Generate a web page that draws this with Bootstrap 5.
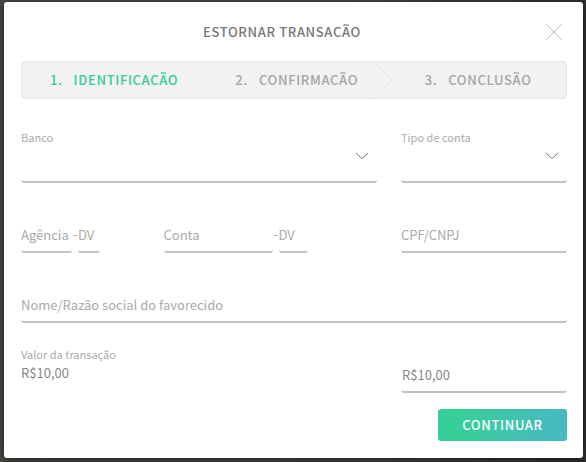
<!DOCTYPE html>
<html lang="pt-BR">
<head>
<meta charset="utf-8">
<meta name="viewport" content="width=device-width, initial-scale=1">
<title>Estornar</title>
<link href="https://cdn.jsdelivr.net/npm/bootstrap@5.3.0/dist/css/bootstrap.min.css" rel="stylesheet">
<style>
body{background:linear-gradient(90deg,#4a4744,#444 60%,#303030);font-family:"Noto Sans CJK SC","Open Sans",sans-serif;font-size:13px;line-height:20px;color:#888;min-height:100vh;padding:2px 3px 4px 4px}
.dialog-box{background:#fff;border-radius:3px;padding:20px 16px 17px 17px;box-shadow:0 2px 8px rgba(0,0,0,.5)}
.dialog-title,.steps,.go-btn{font-size:13px;line-height:20px;font-weight:500;letter-spacing:.05em}
.dialog-title{color:#777}
.dialog-head{padding-bottom:19px}
.close-btn{width:24px;height:20px;border:0;padding:0 2px 0 0;background:none;line-height:0}
.steps{background:#f2f2f2;border:1px solid #e3e6e7;border-radius:3px;color:#a5a5a5}
.steps li{display:flex;align-items:center;width:33.333%;height:36px;padding-left:28px;gap:11px}
.steps li:nth-child(2){padding-left:32px}
.steps li:last-child{padding-left:40px}
.steps li.current{color:#3c9}
.steps svg{flex:none;width:20px;height:36px;margin-right:-8px}
.caption{display:block;font-size:11px;line-height:14px;padding-bottom:2px;color:#aaa}
.line-field{display:block;border:0;border-bottom:2px solid #c0c4c8;border-radius:3px;background-color:transparent;padding:0 0 2px;width:100%;height:34px;color:#888;font-size:13px;outline-offset:2px}
.line-field::placeholder{color:#aaa;opacity:1}
select.line-field{height:37px;appearance:none;background:url("data:image/svg+xml,%3Csvg xmlns='http://www.w3.org/2000/svg' width='14' height='8'%3E%3Cpath d='M1 1l6 5.5L13 1' fill='none' stroke='%23777'/%3E%3C/svg%3E") no-repeat right 8px top 6px}
.w-agency{width:51px}.w-digit{width:22px}.w-account{width:109px}.w-account-digit{width:29px}
.dash{width:6px;text-align:center;line-height:30px;color:#aaa}
.r-bank{margin-top:31px}.r-account{margin-top:36px}.r-name{margin-top:36px}.r-value{margin-top:24px}
.r-value .line-field{margin-top:12px;padding-left:1px}
.go-btn,.go-btn:hover{width:129px;height:32px;padding:0;border:0;border-radius:3px;background:linear-gradient(90deg,#37cf97 15%,#47b8c4);color:#fff}
</style>
<script src="https://cdn.jsdelivr.net/npm/bootstrap@5.3.0/dist/js/bootstrap.bundle.min.js" defer></script>
</head>
<body>
<main class="dialog-box" role="dialog" aria-labelledby="title">
  <div class="dialog-head d-flex">
    <h1 class="dialog-title flex-fill text-center text-uppercase mb-0" id="title">Estornar transacão</h1>
    <button type="button" class="close-btn" aria-label="Fechar"><svg width="18" height="18" viewBox="0 0 18 18"><path d="M1 1l16 16M17 1L1 17" fill="none" stroke="#bbb"/></svg></button>
  </div>
  <ol class="steps d-flex list-unstyled mb-0 text-uppercase">
    <li class="current"><span>1.</span><span class="flex-fill">Identificacão</span><svg viewBox="0 0 20 36" aria-hidden="true"><path d="M0 0l18 18L1 36" fill="none" stroke="#fafafa"/><path d="M1 0l18 18L2 36" fill="none" stroke="#dfe5e6"/></svg></li>
    <li><span>2.</span><span class="flex-fill">Confirmacão</span><svg viewBox="0 0 20 36" aria-hidden="true"><path d="M0 0l18 18L1 36" fill="none" stroke="#fafafa"/><path d="M1 0l18 18L2 36" fill="none" stroke="#dfe5e6"/></svg></li>
    <li><span>3.</span><span class="flex-fill">Conclusão</span></li>
  </ol>
  <form>
    <div class="row gx-4 r-bank">
      <div class="col-8"><label class="caption" for="bank">Banco</label><select class="line-field" id="bank"></select></div>
      <div class="col-4"><label class="caption" for="kind">Tipo de conta</label><select class="line-field" id="kind"></select></div>
    </div>
    <div class="row gx-4 r-account">
      <div class="col-3 d-flex"><input class="line-field w-agency" placeholder="Agência" aria-label="Agência"><span class="dash">-</span><input class="line-field w-digit" placeholder="DV" aria-label="DV da agência"></div>
      <div class="col-5 d-flex"><input class="line-field w-account" placeholder="Conta" aria-label="Conta"><span class="dash">-</span><input class="line-field w-account-digit" placeholder="DV" aria-label="DV da conta"></div>
      <div class="col-4"><input class="line-field" placeholder="CPF/CNPJ" aria-label="CPF/CNPJ"></div>
    </div>
    <div class="r-name"><input class="line-field" placeholder="Nome/Razão social do favorecido" aria-label="Nome/Razão social do favorecido"></div>
    <div class="row gx-4 r-value">
      <div class="col-8"><label class="caption" for="amount">Valor da transação</label><div>R$10,00</div></div>
      <div class="col-4"><input class="line-field" id="amount" value="R$10,00"></div>
    </div>
    <div class="d-flex justify-content-end mt-3"><button type="submit" class="btn go-btn text-uppercase">Continuar</button></div>
  </form>
</main>
</body>
</html>
